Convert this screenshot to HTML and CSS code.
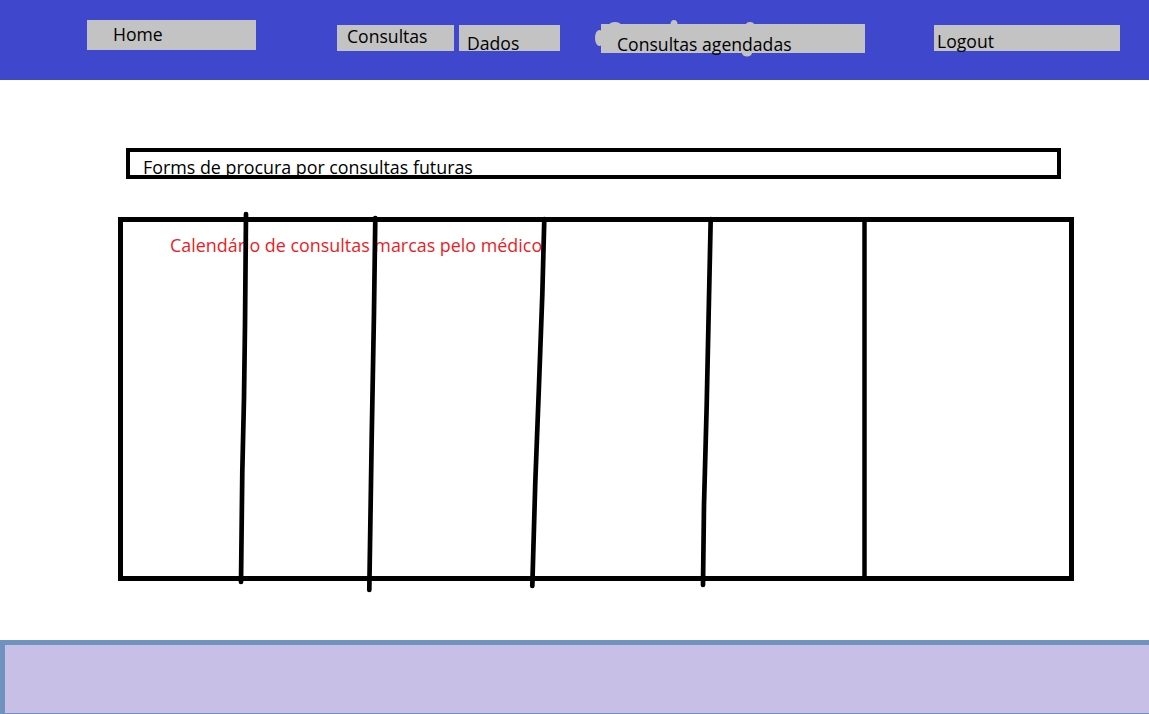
FILE: index.html
```html
<!DOCTYPE html>
<html lang="pt">
<head>
<meta charset="utf-8">
<title>Consultas</title>
<link rel="stylesheet" href="styles.css">
</head>
<body>
<header class="topbar">
  <nav class="nav">
    <a class="nav-item nav-home"><span class="nav-label">Home</span></a>
    <a class="nav-item nav-consultas"><span class="nav-label">Consultas</span></a>
    <a class="nav-item nav-dados"><span class="nav-label">Dados</span></a>
    <a class="nav-item nav-agendadas">
      <svg class="scribble" width="280" height="48" viewBox="0 0 280 48">
        <ellipse cx="6.5" cy="22" rx="4.5" ry="8"/>
        <ellipse cx="22" cy="8.5" rx="5.5" ry="2.5"/>
        <ellipse cx="81" cy="8.5" rx="3.5" ry="4.5"/>
        <ellipse cx="157" cy="8.5" rx="4" ry="2.5"/>
        <ellipse cx="154" cy="37" rx="5" ry="3.5"/>
      </svg>
      <span class="nav-label">Consultas agendadas</span>
    </a>
    <a class="nav-item nav-logout"><span class="nav-label">Logout</span></a>
  </nav>
</header>
<main class="content">
  <div class="search-form">Forms de procura por consultas futuras</div>
  <section class="calendar">
    <p class="calendar-title">Calendário de consultas marcas pelo médico</p>
    <svg class="calendar-lines" width="956" height="364" viewBox="0 0 956 364">
      <polyline points="128,-3 127,108 126,181 124.3,255 123,365"/>
      <polyline points="257.3,1 256,95 253.7,221 251.3,373"/>
      <polyline points="426.3,2 424.3,78 421,168 417.3,265 414.3,369"/>
      <polyline points="592.7,2 591,81 588.7,188 586,288 585,368"/>
      <line class="straight" x1="746.5" y1="0" x2="746.5" y2="364"/>
    </svg>
  </section>
</main>
<footer class="footer"></footer>
</body>
</html>
```
FILE: styles.css
```css
html, body {
  margin: 0;
  padding: 0;
  background: #ffffff;
}

body {
  font-family: "Open Sans", "Noto Sans", sans-serif;
  font-size: 17.6px;
  color: #000000;
  width: 1149px;
  height: 714px;
  overflow: hidden;
}

.topbar {
  height: 80px;
  background: #3f48cc;
}

.nav {
  display: flex;
  align-items: flex-start;
}

.nav-item {
  display: block;
  flex-shrink: 0;
  box-sizing: border-box;
  background: #c3c3c3;
  color: #000000;
  text-decoration: none;
  line-height: 22px;
  white-space: nowrap;
  position: relative;
}

.nav-label {
  position: relative;
}

.nav-home {
  margin-left: 87px;
  margin-top: 20px;
  width: 169px;
  height: 30px;
  padding: 2.5px 0 0 26px;
}

.nav-consultas {
  margin-left: 81px;
  margin-top: 25px;
  width: 117px;
  height: 26px;
  padding: 0 0 0 10px;
}

.nav-dados {
  margin-left: 5px;
  margin-top: 25px;
  width: 101px;
  height: 26px;
  padding: 6.5px 0 0 8px;
}

.nav-agendadas {
  margin-left: 41px;
  margin-top: 24px;
  width: 264px;
  height: 29px;
  padding: 9px 0 0 16px;
}

.scribble {
  position: absolute;
  left: -8px;
  top: -8px;
  overflow: visible;
  fill: #c3c3c3;
}

.nav-logout {
  margin-left: 69px;
  margin-top: 25px;
  width: 186px;
  height: 26px;
  padding: 5px 0 0 3px;
}

.content {
  display: flex;
  flex-direction: column;
  align-items: flex-start;
}

.search-form {
  box-sizing: border-box;
  margin-top: 68px;
  margin-left: 126px;
  width: 935px;
  height: 31px;
  border: 4px solid #000000;
  padding: 4px 0 0 13px;
  font-size: 17.85px;
  line-height: 22px;
  white-space: nowrap;
}

.calendar {
  box-sizing: border-box;
  position: relative;
  margin-top: 38px;
  margin-left: 118px;
  width: 956px;
  height: 364px;
  border: 5px solid #000000;
}

.calendar-title {
  margin: 0;
  padding: 11.5px 0 0 47px;
  font-size: 17.9px;
  line-height: 22px;
  color: #ed1c24;
  white-space: nowrap;
}

.calendar-lines {
  position: absolute;
  left: -5px;
  top: -5px;
  overflow: visible;
  fill: none;
  stroke: #000000;
  stroke-width: 4.7;
  stroke-linecap: round;
  stroke-linejoin: round;
}

.calendar-lines .straight {
  stroke-linecap: butt;
  stroke-width: 4.5;
}

.footer {
  box-sizing: border-box;
  margin-top: 59px;
  height: 74px;
  background: #c8bfe7;
  border-top: 5px solid #7092be;
  border-left: 5px solid #7092be;
  border-bottom: 1px solid #7092be;
}
```
